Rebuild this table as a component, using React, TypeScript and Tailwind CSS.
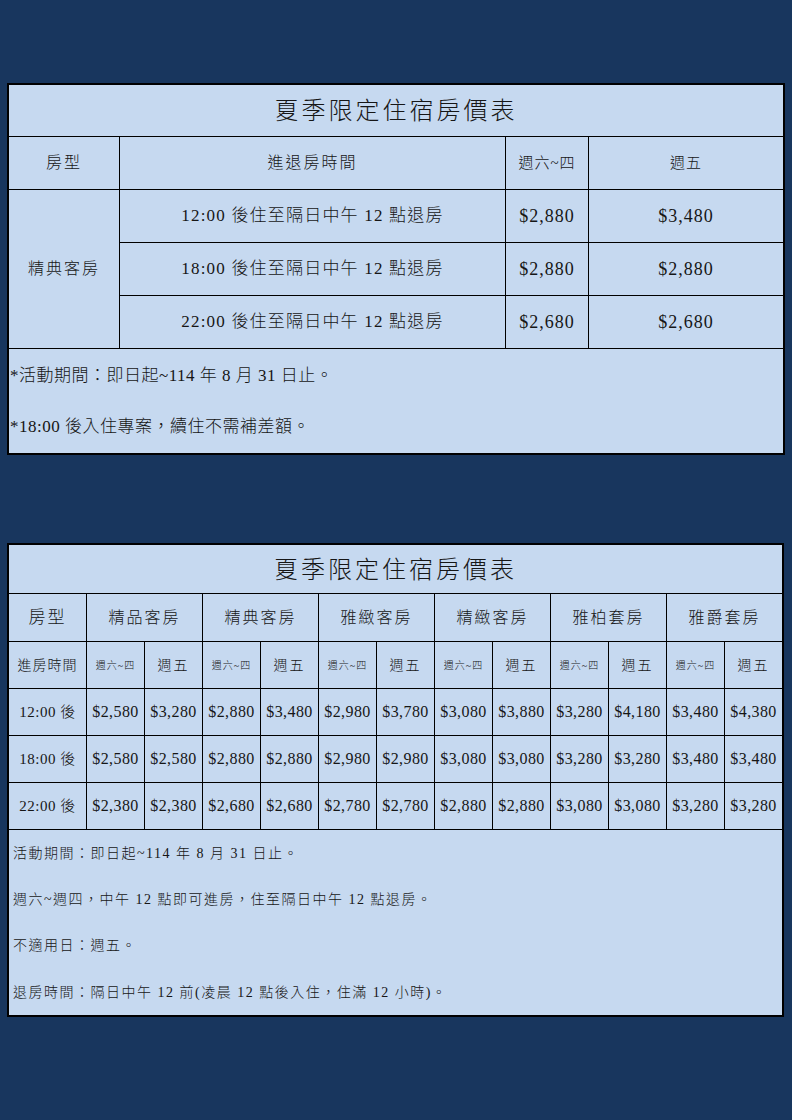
import React from 'react'

const cell = 'border-r border-b border-black text-center align-middle p-0'
const last = 'border-b border-black text-center align-middle p-0'

const rooms = ['精品客房', '精典客房', '雅緻客房', '精緻客房', '雅柏套房', '雅爵套房']

const prices: { time: string; values: string[] }[] = [
  { time: '12:00 後', values: ['2,580', '3,280', '2,880', '3,480', '2,980', '3,780', '3,080', '3,880', '3,280', '4,180', '3,480', '4,380'] },
  { time: '18:00 後', values: ['2,580', '2,580', '2,880', '2,880', '2,980', '2,980', '3,080', '3,080', '3,280', '3,280', '3,480', '3,480'] },
  { time: '22:00 後', values: ['2,380', '2,380', '2,680', '2,680', '2,780', '2,780', '2,880', '2,880', '3,080', '3,080', '3,280', '3,280'] },
]

const notes2 = [
  '活動期間：即日起~114 年 8 月 31 日止。',
  '週六~週四，中午 12 點即可進房，住至隔日中午 12 點退房。',
  '不適用日：週五。',
  '退房時間：隔日中午 12 前(凌晨 12 點後入住，住滿 12 小時)。',
]

function FirstTable() {
  const rows = [
    { time: '12:00 後住至隔日中午 12 點退房', a: '$2,880', b: '$3,480' },
    { time: '18:00 後住至隔日中午 12 點退房', a: '$2,880', b: '$2,880' },
    { time: '22:00 後住至隔日中午 12 點退房', a: '$2,680', b: '$2,680' },
  ]
  return (
    <div className="ml-[7px] w-[778px] border-2 border-black bg-[#c6d9f0]">
      <table className="w-[774px] table-fixed border-separate border-spacing-0">
        <colgroup>
          <col className="w-[111px]" />
          <col className="w-[386px]" />
          <col className="w-[83px]" />
          <col className="w-[194px]" />
        </colgroup>
        <tbody>
          <tr className="h-[52px]">
            <td colSpan={4} className={`${last} text-[24px] tracking-[3px] pt-[1px]`}>夏季限定住宿房價表</td>
          </tr>
          <tr className="h-[53px]">
            <td className={`${cell} text-[16px] tracking-[2px]`}>房型</td>
            <td className={`${cell} text-[16px] tracking-[2px]`}>進退房時間</td>
            <td className={`${cell} text-[15px] tracking-[1px]`}>週六~四</td>
            <td className={`${last} text-[15px] tracking-[1px]`}>週五</td>
          </tr>
          {rows.map((r, i) => (
            <tr key={r.time} className="h-[53px]">
              {i === 0 && (
                <td rowSpan={3} className={`${cell} text-[16px] tracking-[2px]`}>精典客房</td>
              )}
              <td className={`${cell} text-[17px] tracking-[1.2px]`}>{r.time}</td>
              <td className={`${cell} text-[18px] tracking-[1px]`}>{r.a}</td>
              <td className={`${last} text-[18px] tracking-[1px]`}>{r.b}</td>
            </tr>
          ))}
          <tr className="h-[52px]">
            <td colSpan={4} className="p-0 pl-[1px] pt-[2px] text-left text-[17px] tracking-[0.5px]">*活動期間：即日起~114 年 8 月 31 日止。</td>
          </tr>
          <tr className="h-[52px]">
            <td colSpan={4} className="p-0 pl-[1px] text-left text-[17px] tracking-[0.5px]">*18:00 後入住專案，續住不需補差額。</td>
          </tr>
        </tbody>
      </table>
    </div>
  )
}

function SecondTable() {
  return (
    <div className="ml-[7px] mt-[88px] w-[777px] border-2 border-black bg-[#c6d9f0]">
      <table className="w-[773px] table-fixed border-separate border-spacing-0">
        <colgroup>
          <col className="w-[78px]" />
          {Array.from({ length: 11 }).map((_, i) => (
            <col key={i} className="w-[58px]" />
          ))}
          <col className="w-[57px]" />
        </colgroup>
        <tbody>
          <tr className="h-[49px]">
            <td colSpan={13} className={`${last} text-[24px] tracking-[3px] pt-[1px]`}>夏季限定住宿房價表</td>
          </tr>
          <tr className="h-[48px]">
            <td className={`${cell} text-[17px] tracking-[2px]`}>房型</td>
            {rooms.map((r, i) => (
              <td key={r} colSpan={2} className={`${i === 5 ? last : cell} text-[16px] tracking-[2px]`}>{r}</td>
            ))}
          </tr>
          <tr className="h-[47px]">
            <td className={`${cell} text-[14px] tracking-[1px]`}>進房時間</td>
            {rooms.map((r, i) => (
              <React.Fragment key={r}>
                <td className={`${cell} text-[10px] tracking-[1px]`}>週六~四</td>
                <td className={`${i === 5 ? last : cell} text-[14px] tracking-[2px]`}>週五</td>
              </React.Fragment>
            ))}
          </tr>
          {prices.map(row => (
            <tr key={row.time} className="h-[47px]">
              <td className={`${cell} text-[15px] tracking-[0.5px]`}>{row.time}</td>
              {row.values.map((v, i) => (
                <td key={i} className={`${i === 11 ? last : cell} text-[16px] tracking-[0.4px]`}>${v}</td>
              ))}
            </tr>
          ))}
          {notes2.map((n, i) => (
            <tr key={n} className={i === 2 ? 'h-[47px]' : 'h-[46px]'}>
              <td colSpan={13} className="p-0 pl-[4px] text-left text-[14px] tracking-[1.5px]">{n}</td>
            </tr>
          ))}
        </tbody>
      </table>
    </div>
  )
}

export default function App() {
  return (
    <div className="min-h-[1120px] w-full bg-[#18365e] pt-[83px] font-light text-[#161616] font-['Liberation_Serif','Noto_Sans_CJK_TC',serif]">
      <FirstTable />
      <SecondTable />
    </div>
  )
}
